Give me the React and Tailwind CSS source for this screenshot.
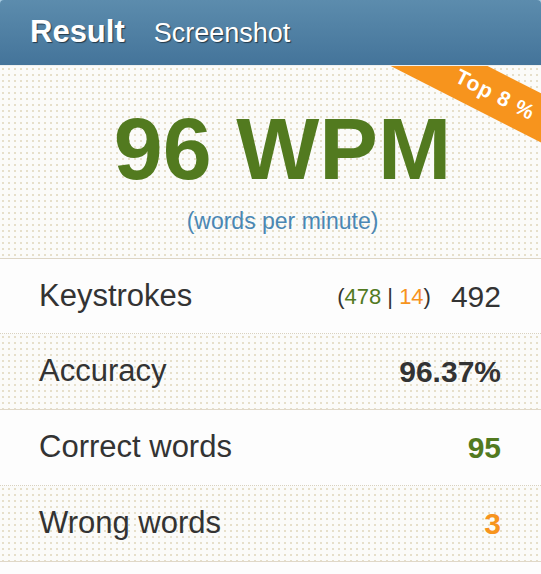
import React from "react";

const dots =
  "bg-[#fbfbf9] bg-[radial-gradient(circle,#e6dfca_0.8px,transparent_1px)] bg-[length:6px_6px]";

function Row({ label, children, dotted, first }) {
  return (
    <div
      className={
        "flex items-center justify-between pl-[39px] pr-10 " +
        (first ? "h-[75px] " : "h-[76px] ") +
        (dotted
          ? dots + " border-b border-solid border-[#e0d8c8]"
          : "bg-[#fdfdfd] border-b border-dotted border-[#d9d2bf]")
      }
    >
      <span className="text-[31px] text-[#333333]">{label}</span>
      <div className="flex items-center">{children}</div>
    </div>
  );
}

export default function App() {
  return (
    <div
      className="w-[541px] h-[574px] overflow-hidden bg-[#fdfdfd]"
      style={{ fontFamily: '"Liberation Sans", Arial, sans-serif' }}
    >
      <div className="bg-[#a9cde3]">
        <div className="h-[65px] rounded-t-[4px] bg-gradient-to-b from-[#5c8cad] to-[#44749a] flex items-baseline pl-[30px] pt-[14px] gap-[29px] text-white [text-shadow:1px_1px_1px_rgba(0,0,0,0.55)]">
          <span className="text-[31px] font-bold leading-[36px]">Result</span>
          <span className="text-[27px] leading-[36px]">Screenshot</span>
        </div>
      </div>
      <div className="h-px bg-[#eef0ef]" />
      <div
        className={
          "relative overflow-hidden h-[193px] border-b border-[#ddd5c5] flex flex-col items-center pt-[39px] pl-[24px] " +
          dots
        }
      >
        <div className="absolute left-[368px] top-[8px] w-[260px] h-[44px] rotate-[27deg] bg-[#f7941d] flex items-center justify-center">
          <span className="text-white font-bold text-[21px] tracking-[1px] pr-[6px]">
            Top 8 %
          </span>
        </div>
        <div className="text-[88px] leading-none font-bold text-[#527a1f]">
          96 WPM
        </div>
        <div className="mt-[17px] text-[23px] leading-none text-[#4a87b4]">
          (words per minute)
        </div>
      </div>
      <Row label="Keystrokes" first>
        <span className="text-[22px] text-[#333333]">
          (<span className="text-[#527a1f]">478</span> |{" "}
          <span className="text-[#f7941d]">14</span>)
        </span>
        <span className="ml-[20px] text-[30px] text-[#333333]">492</span>
      </Row>
      <Row label="Accuracy" dotted>
        <span className="text-[30px] font-bold text-[#333333]">96.37%</span>
      </Row>
      <Row label="Correct words">
        <span className="text-[30px] font-bold text-[#527a1f]">95</span>
      </Row>
      <Row label="Wrong words" dotted>
        <span className="text-[30px] font-bold text-[#f7941d]">3</span>
      </Row>
    </div>
  );
}
